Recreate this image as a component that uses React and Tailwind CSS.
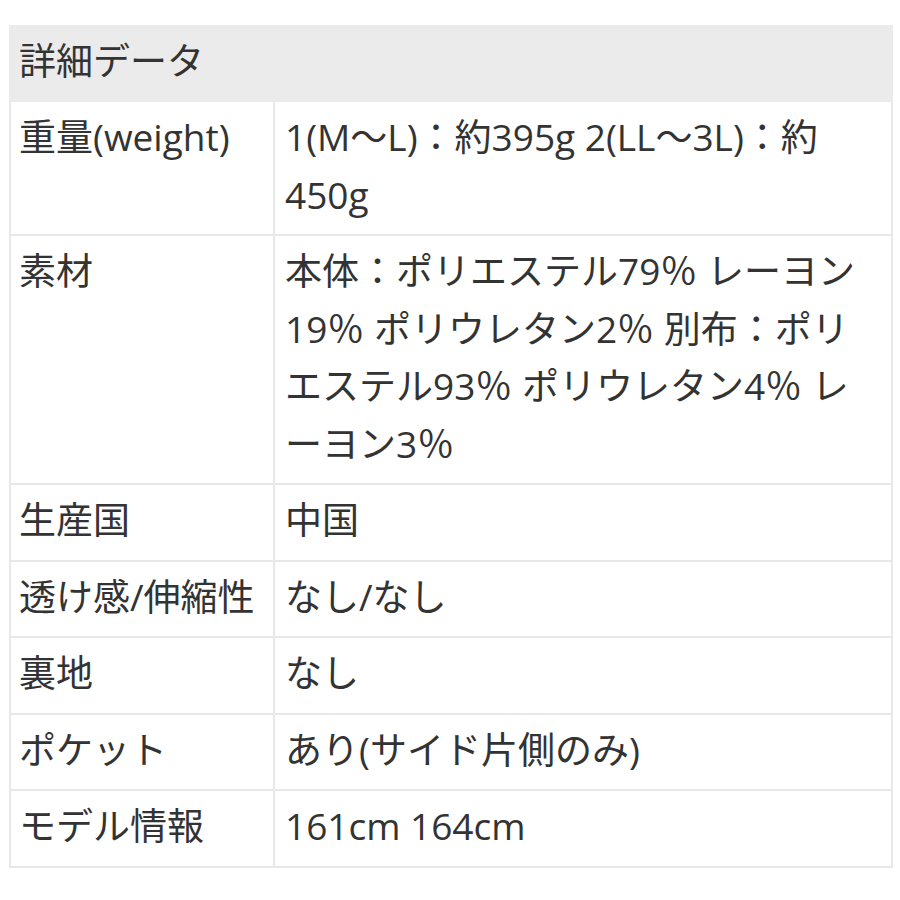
import React from 'react'

const rows = [
  ['重量(weight)', '1(M～L)：約395g 2(LL～3L)：約450g'],
  ['素材', '本体：ポリエステル79％ レーヨン19％ ポリウレタン2％ 別布：ポリエステル93％ ポリウレタン4％ レーヨン3％'],
  ['生産国', '中国'],
  ['透け感/伸縮性', 'なし/なし'],
  ['裏地', 'なし'],
  ['ポケット', 'あり(サイド片側のみ)'],
  ['モデル情報', '161cm 164cm'],
]

export default function App() {
  return (
    <div
      className="w-[900px] h-[900px] bg-white pt-[25px] px-[9px] text-[#333333]"
      style={{ fontFamily: '"Open Sans", "Noto Sans CJK JP", sans-serif' }}
    >
      <table className="w-[884px] border-collapse text-[37px] leading-[57.5px]">
        <thead>
          <tr>
            <th colSpan={2} className="bg-[#ebebeb] h-[75px] px-[8px] pb-[5px] text-left font-normal border-2 border-[#ebebeb]">
              詳細データ
            </th>
          </tr>
        </thead>
        <tbody>
          {rows.map(([k, v]) => (
            <tr key={k}>
              <td className="w-[264px] align-top px-[8px] pt-[6px] pb-[11px] border-2 border-[#e8e8e8] whitespace-nowrap">{k}</td>
              <td className="align-top px-[10px] pt-[6px] pb-[11px] border-2 border-[#e8e8e8]">{v}</td>
            </tr>
          ))}
        </tbody>
      </table>
    </div>
  )
}
